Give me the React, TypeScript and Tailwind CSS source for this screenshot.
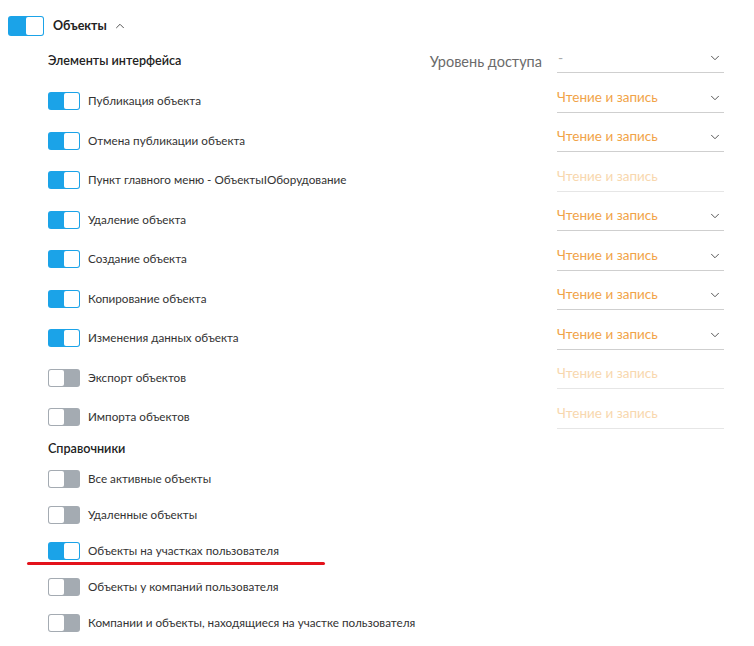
import React from 'react';
import { ChevronDown, ChevronUp } from 'lucide-react';

type Row = { label: string; on: boolean; access?: 'active' | 'disabled' };

const interfaceRows: Row[] = [
  { label: 'Публикация объекта', on: true, access: 'active' },
  { label: 'Отмена публикации объекта', on: true, access: 'active' },
  { label: 'Пункт главного меню - ОбъектыIОборудование', on: true, access: 'disabled' },
  { label: 'Удаление объекта', on: true, access: 'active' },
  { label: 'Создание объекта', on: true, access: 'active' },
  { label: 'Копирование объекта', on: true, access: 'active' },
  { label: 'Изменения данных объекта', on: true, access: 'active' },
  { label: 'Экспорт объектов', on: false, access: 'disabled' },
  { label: 'Импорта объектов', on: false, access: 'disabled' },
];

const refRows: Row[] = [
  { label: 'Все активные объекты', on: false },
  { label: 'Удаленные объекты', on: false },
  { label: 'Объекты на участках пользователя', on: true },
  { label: 'Объекты у компаний пользователя', on: false },
  { label: 'Компании и объекты, находящиеся на участке пользователя', on: false },
];

function Toggle({ on, big }: { on: boolean; big?: boolean }) {
  const size = big ? 'w-[36px] h-[20px]' : 'w-[32px] h-[18px]';
  const knob = big ? 'w-[17px] h-[18px]' : 'w-[15px] h-[16px]';
  return (
    <div
      className={`${size} shrink-0 rounded-[3px] p-px flex ${
        on ? 'bg-[#1ba3e8] justify-end' : 'bg-[#a4abb2] justify-start'
      }`}
    >
      <div className={`${knob} bg-white rounded-[2px]`} />
    </div>
  );
}

function Access({ state }: { state: 'active' | 'disabled' }) {
  const active = state === 'active';
  return (
    <div
      className={`w-[167px] h-[23px] pb-[6px] flex items-start justify-between border-b ${
        active ? 'border-[#cfcfcf]' : 'border-[#e6e6e6]'
      }`}
    >
      <span
        className={`text-[13.5px] leading-[15px] ${active ? 'text-[#f1a347]' : 'text-[#f8d7ae]'}`}
      >
        Чтение и запись
      </span>
      {active && <ChevronDown size={14} strokeWidth={1.7} className="text-[#555] mr-[2px] mt-[1px]" />}
    </div>
  );
}

export default function App() {
  return (
    <div
      className="relative w-[754px] h-[646px] bg-white pt-[16px] pl-[8px] text-[#333]"
      style={{ fontFamily: 'Lato, "Noto Sans", sans-serif' }}
    >
      <div className="h-[20px] flex items-center">
        <Toggle on big />
        <span className="ml-[9px] text-[12.5px] font-bold text-[#222]">Объекты</span>
        <ChevronUp size={14} strokeWidth={1.7} className="ml-[6px] text-[#555]" />
      </div>

      <div className="mt-[6px] pl-[40px] w-[716px]">
        <div className="h-[39.5px] flex items-center justify-between">
          <span className="text-[12.6px] font-semibold text-[#222]">Элементы интерфейса</span>
          <div className="flex items-center">
            <span className="text-[14.5px] text-[#6b6b6b] mr-[15px]">Уровень доступа</span>
            <div className="w-[167px] h-[23px] pb-[6px] flex items-start justify-between border-b border-[#cfcfcf]">
              <span className="text-[14px] leading-[15px] text-[#aaa] pl-[1px]">-</span>
              <ChevronDown size={14} strokeWidth={1.7} className="text-[#555] mr-[2px] mt-[1px]" />
            </div>
          </div>
        </div>

        {interfaceRows.map((r) => (
          <div key={r.label} className="h-[39.5px] flex items-center justify-between">
            <div className="flex items-center">
              <Toggle on={r.on} />
              <span className="ml-[8px] text-[11.7px] text-[#333]">{r.label}</span>
            </div>
            <Access state={r.access!} />
          </div>
        ))}

        <div className="h-[24px] flex items-center">
          <span className="text-[12.6px] font-semibold text-[#222]">Справочники</span>
        </div>

        {refRows.map((r) => (
          <div key={r.label} className="h-[36px] flex items-center">
            <Toggle on={r.on} />
            <span className="ml-[8px] text-[11.7px] text-[#333]">{r.label}</span>
          </div>
        ))}
      </div>

      <div className="absolute left-[27px] top-[562px] w-[298px] h-[2.5px] bg-[#e3121b] rounded-full" />
    </div>
  );
}
